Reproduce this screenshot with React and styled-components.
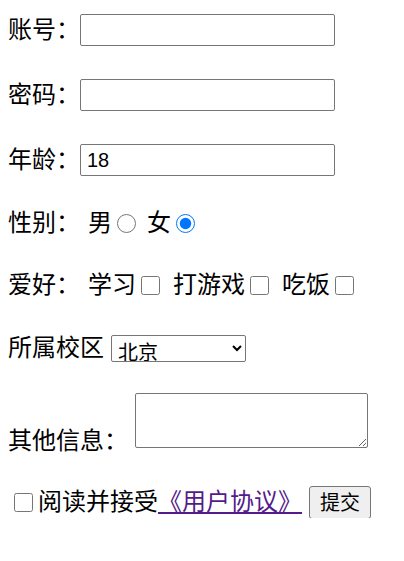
import React, { useState } from "react";
import styled, { createGlobalStyle } from "styled-components";

const GlobalStyle = createGlobalStyle`
  body {
    margin: 0;
    background: #fff;
    color: #000;
    font-family: "Noto Sans CJK SC", "Microsoft YaHei", sans-serif;
    font-size: 24px;
  }
`;

const Form = styled.form`
  display: flex;
  flex-direction: column;
  padding: 0 0 0 8px;
`;

const Row = styled.div`
  display: flex;
  align-items: ${(p) => p.$align || "center"};
  height: ${(p) => p.$height || 32}px;
  margin-top: ${(p) => p.$top}px;
  white-space: nowrap;
`;

const Label = styled.span`
  line-height: 32px;
  margin-right: ${(p) => p.$gap || 0}px;
  margin-bottom: ${(p) => (p.$drop ? 0 : 4)}px;
  padding-top: ${(p) => p.$drop || 0}px;
`;

const Option = styled.span`
  line-height: 32px;
  margin-bottom: 4px;
`;

const TextInput = styled.input`
  box-sizing: border-box;
  width: 255px;
  height: 32px;
  margin: 0;
  padding: 0 6px;
  border: 1px solid #767676;
  border-radius: 2px;
  font-family: "Liberation Sans", Arial, sans-serif;
  font-size: 20px;
  color: #000;
  outline: none;
`;

const Tick = styled.input`
  width: 19px;
  height: 19px;
  margin: 0 ${(p) => p.$after ?? 11}px 0 ${(p) => p.$before ?? 5}px;
  flex: none;
`;

const Select = styled.select`
  box-sizing: border-box;
  width: 135px;
  height: 27px;
  margin: 0;
  padding: 0 2px;
  border: 1px solid #767676;
  border-radius: 2px;
  background: #fff;
  font-family: "Noto Sans CJK SC", sans-serif;
  font-size: 20px;
  line-height: 25px;
  color: #000;
`;

const Area = styled.textarea`
  box-sizing: border-box;
  width: 233px;
  height: 55px;
  margin: 0;
  border: 1px solid #767676;
  border-radius: 2px;
  font-size: 16px;
`;

const Link = styled.a`
  color: #551a8b;
  text-decoration: underline;
  line-height: 32px;
  margin-bottom: 4px;
`;

const Button = styled.button`
  box-sizing: border-box;
  width: 62px;
  height: 33px;
  margin-left: 7px;
  padding: 0 0 2px;
  border: 1px solid #767676;
  border-radius: 3px;
  background: #efefef;
  font-family: "Noto Sans CJK SC", sans-serif;
  font-size: 20px;
  color: #000;
`;

export default function App() {
  const [sex, setSex] = useState("female");
  return (
    <>
      <GlobalStyle />
      <Form onSubmit={(e) => e.preventDefault()}>
        <Row $top={14}>
          <Label>账号：</Label>
          <TextInput type="text" />
        </Row>
        <Row $top={33}>
          <Label>密码：</Label>
          <TextInput type="password" />
        </Row>
        <Row $top={33}>
          <Label>年龄：</Label>
          <TextInput type="text" defaultValue="18" />
        </Row>
        <Row $top={31}>
          <Label $gap={8}>性别：</Label>
          <Option>男</Option>
          <Tick type="radio" name="sex" checked={sex === "male"} onChange={() => setSex("male")} />
          <Option>女</Option>
          <Tick type="radio" name="sex" checked={sex === "female"} onChange={() => setSex("female")} />
        </Row>
        <Row $top={30}>
          <Label $gap={8}>爱好：</Label>
          <Option>学习</Option>
          <Tick type="checkbox" $before={5} $after={13} />
          <Option>打游戏</Option>
          <Tick type="checkbox" $before={5} $after={13} />
          <Option>吃饭</Option>
          <Tick type="checkbox" $before={5} />
        </Row>
        <Row $top={31}>
          <Label $gap={7}>所属校区</Label>
          <Select defaultValue="bj">
            <option value="bj">北京</option>
            <option value="sh">上海</option>
            <option value="gz">广州</option>
          </Select>
        </Row>
        <Row $top={29} $height={55} $align="flex-start">
          <Label $gap={7} $drop={30}>其他信息：</Label>
          <Area />
        </Row>
        <Row $top={38}>
          <Tick type="checkbox" $before={6} $after={5} />
          <Option>阅读并接受</Option>
          <Link href="#">《用户协议》</Link>
          <Button type="submit">提交</Button>
        </Row>
      </Form>
    </>
  );
}
